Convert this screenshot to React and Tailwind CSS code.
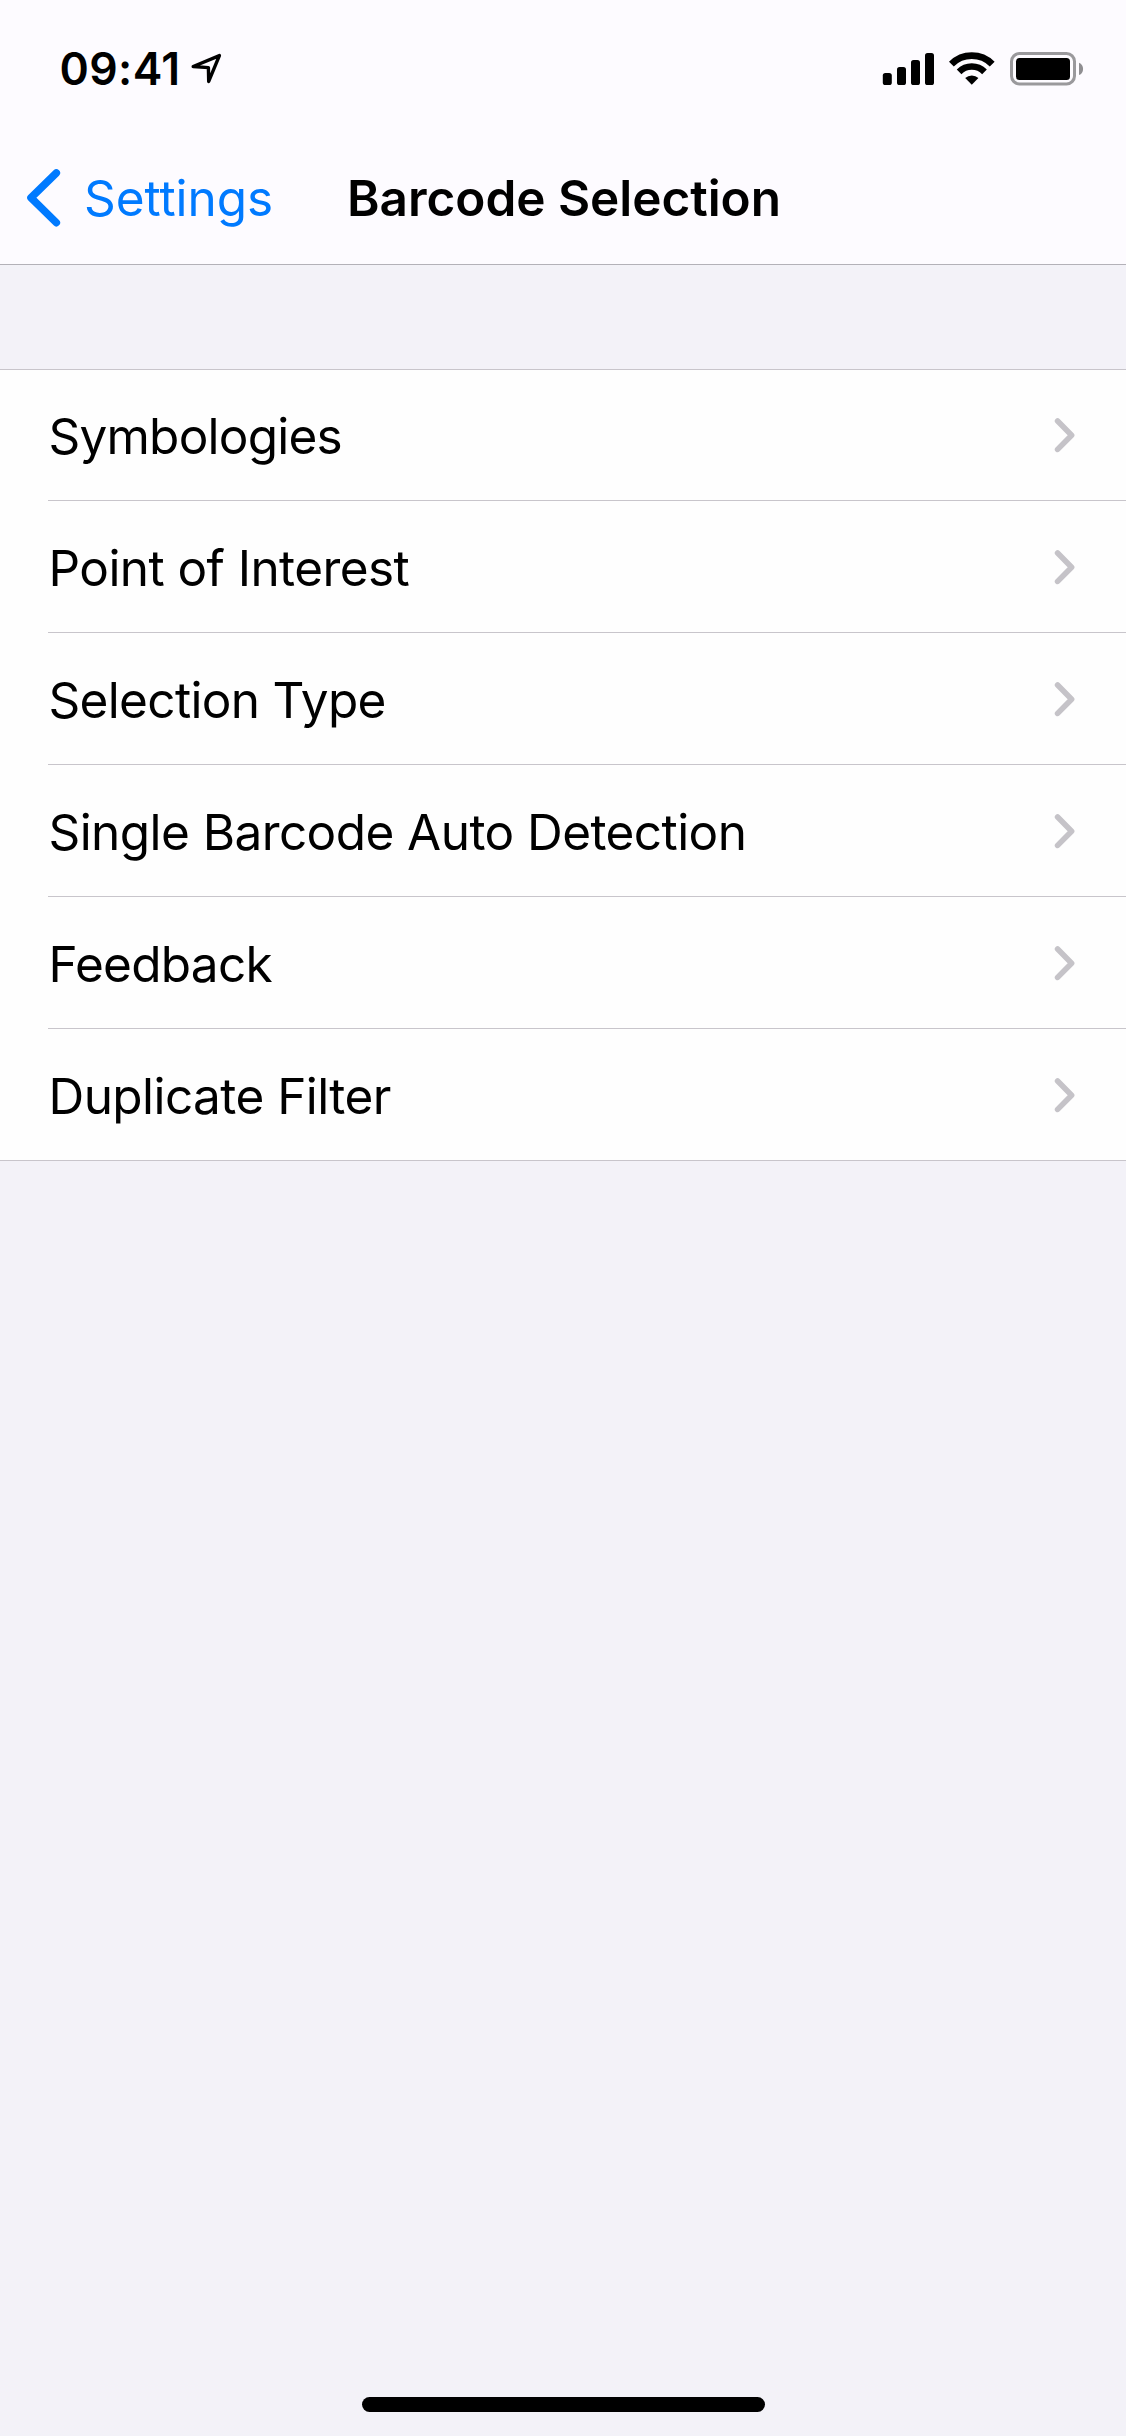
import React from 'react';

const rows = [
  { label: 'Symbologies', text: 'pt-[1px] tracking-[-0.78px]', box: 'h-[131px] border-b' },
  { label: 'Point of Interest', text: 'pt-[3px] tracking-[-0.57px]', box: 'h-[132px] border-b' },
  { label: 'Selection Type', text: 'pt-[3px] tracking-[-0.67px]', box: 'h-[132px] border-b' },
  { label: 'Single Barcode Auto Detection', text: 'pt-[3px] tracking-[-0.57px]', box: 'h-[132px] border-b' },
  { label: 'Feedback', text: 'pt-[3px] tracking-[-0.75px]', box: 'h-[132px] border-b' },
  { label: 'Duplicate Filter', text: 'pt-[3px] tracking-[-0.57px]', box: 'h-[131px]' },
];

function LocationArrow() {
  return (
    <svg className="mt-[50px] ml-[10px] h-9 w-9" viewBox="188 50 36 36" fill="none">
      <path
        d="M193.2 66.5 L219.4 55.6 L208.7 81.4 L208.4 67.6 Z"
        stroke="#000"
        strokeWidth="3.4"
        strokeLinejoin="round"
      />
    </svg>
  );
}

function StatusIcons() {
  return (
    <svg className="mt-[48px] ml-auto mr-[42px] h-[42px] w-[204px]" viewBox="880 48 204 42" fill="none">
      <g fill="#000">
        <rect x="882.8" y="73" width="9" height="12" rx="2.6" />
        <rect x="897" y="67" width="9" height="18" rx="2.6" />
        <rect x="911" y="60" width="9" height="25" rx="2.6" />
        <rect x="925" y="53" width="9" height="32" rx="2.6" />
      </g>
      <g stroke="#000">
        <path d="M951.4 64.1 A28.9 28.9 0 0 1 992.2 64.1" strokeWidth="6.8" />
        <path d="M959.1 71.8 A18 18 0 0 1 984.5 71.8" strokeWidth="6.6" />
      </g>
      <path d="M971.8 84.8 L965.2 78.1 A9.4 9.4 0 0 1 978.4 78.1 Z" fill="#000" />
      <rect x="1011.5" y="53.5" width="63" height="30.5" rx="8" stroke="#9a999c" strokeWidth="3" />
      <rect x="1016" y="58" width="54" height="22" rx="3.5" fill="#000" />
      <path d="M1079 62.8 C1084.4 64.6 1084.4 73.2 1079 75 Z" fill="#8f8e91" />
    </svg>
  );
}

function BackChevron() {
  return (
    <svg className="ml-6 h-[62px] w-10 shrink-0" viewBox="24 167 40 62" fill="none">
      <path
        d="M56.3 173 L31 197.8 L56.3 222.6"
        stroke="#007aff"
        strokeWidth="7.6"
        strokeLinecap="round"
        strokeLinejoin="round"
      />
    </svg>
  );
}

function RowChevron() {
  return (
    <svg className="mr-[48px] h-10 w-[26px] shrink-0" viewBox="1052 415 26 40" fill="none">
      <path
        d="M1057.6 421 L1071.6 435.2 L1057.6 449.4"
        stroke="#c5c3c8"
        strokeWidth="5.6"
        strokeLinecap="round"
        strokeLinejoin="round"
      />
    </svg>
  );
}

export default function App() {
  return (
    <div className="flex h-[2436px] w-[1126px] flex-col bg-[#f3f2f8] font-['Inter',sans-serif] text-black">
      <header className="h-[265px] border-b border-[#b3b1b8] bg-[#fdfbff]">
        <div className="flex h-[132px] items-start whitespace-nowrap">
          <span className="mt-[39px] ml-[59.5px] w-[118.5px] text-[44.5px] leading-[60px] font-semibold tracking-[0.4px]">
            09:41
          </span>
          <LocationArrow />
          <StatusIcons />
        </div>
        <nav className="flex h-[132px] items-center text-[49.5px] leading-[60px] whitespace-nowrap">
          <BackChevron />
          <span className="ml-5 w-[263px] tracking-[-0.05px] text-[#007aff]">Settings</span>
          <h1 className="font-[560] tracking-[-0.04px]">Barcode Selection</h1>
        </nav>
      </header>

      <ul className="mt-[104px] border-y border-[#c8c5cb] bg-[#fefefe]">
        {rows.map((row) => (
          <li key={row.label} className={`ml-12 flex items-center border-[#c8c5cb] ${row.box}`}>
            <span className={`flex-1 pl-[0.5px] text-[49.5px] leading-[60px] whitespace-nowrap ${row.text}`}>
              {row.label}
            </span>
            <RowChevron />
          </li>
        ))}
      </ul>

      <div className="mx-auto mt-auto mb-6 h-[15px] w-[403px] rounded-full bg-black" />
    </div>
  );
}
